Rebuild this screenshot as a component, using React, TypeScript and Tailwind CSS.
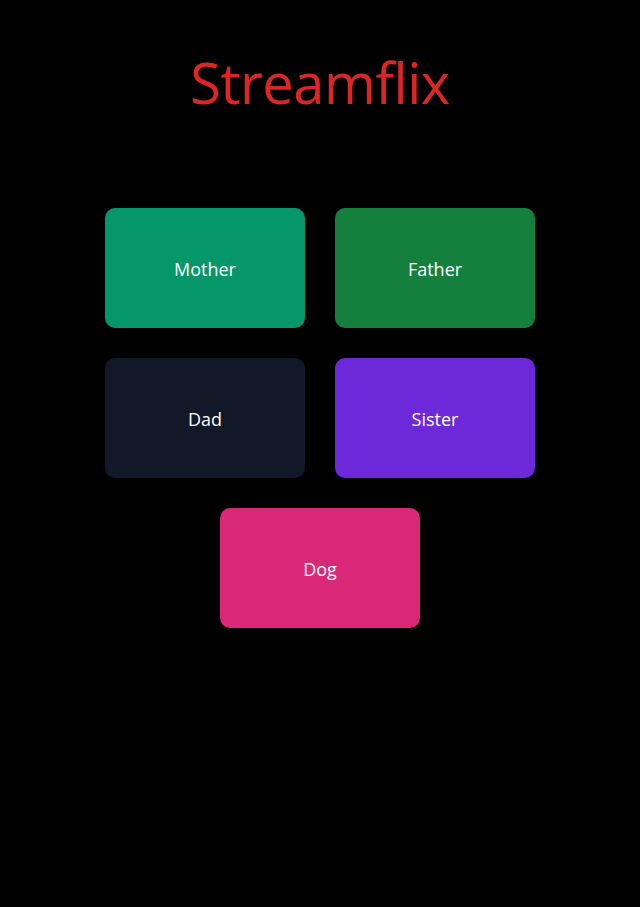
import React from 'react';

const PROFILES = [
  { name: 'Mother', color: 'bg-[#059669]' },
  { name: 'Father', color: 'bg-[#15803d]' },
  { name: 'Dad', color: 'bg-[#111827]' },
  { name: 'Sister', color: 'bg-[#6d28d9]' },
  { name: 'Dog', color: 'bg-[#db2777]' },
];

const App: React.FC = () => {
  return (
    <main className="min-h-screen bg-black font-['Open_Sans',sans-serif] text-white">
      <h1 className="pt-[46px] text-center text-[56px] leading-[72px] text-[#dc2626] tracking-[-0.5px]">
        Streamflix
      </h1>

      {/* Profiles */}
      <div className="mx-auto mt-[90px] flex w-[430px] flex-wrap justify-center gap-[30px]">
        {PROFILES.map(profile => (
          <button
            key={profile.name}
            className={`flex h-[120px] w-[200px] items-center justify-center rounded-[10px] pt-[2px] text-lg ${profile.color}`}
          >
            {profile.name}
          </button>
        ))}
      </div>
    </main>
  );
};

export default App;
